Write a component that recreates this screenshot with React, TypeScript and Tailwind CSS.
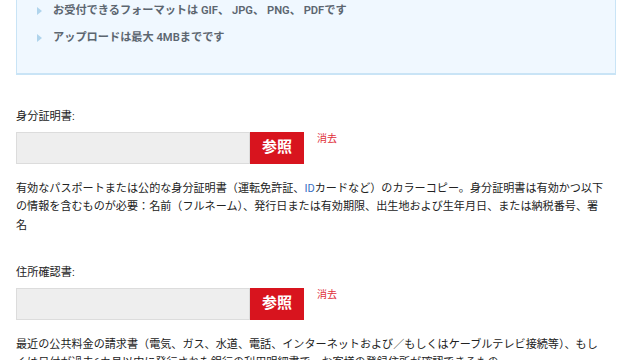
const font = { fontFamily: '"Roboto", "Noto Sans CJK JP", sans-serif' };

const formats = ['お受付できるフォーマットは GIF、 JPG、 PNG、 PDFです', 'アップロードは最大 4MBまでです'];

interface UploadFieldProps {
  label: string;
  note: React.ReactNode;
}

const UploadField = ({ label, note }: UploadFieldProps) => (
  <div className="flex flex-col">
    <label className="text-[11.2px] leading-[19px] text-[#222]">{label}</label>
    <div className="mt-[5.5px] flex items-start">
      <div className="h-[32px] w-[234px] border border-[#dcdcdc] bg-[#eeeeee]" />
      <button type="button" className="h-[32px] w-[54px] bg-[#d8141e] text-[15px] font-bold text-white">
        参照
      </button>
      <button type="button" className="ml-[13px] mt-[1px] text-[10px] leading-[12px] text-[#e0303a]">
        消去
      </button>
    </div>
    <p className="mt-[16px] w-[589px] text-[11.1px] leading-[18.5px] text-[#222]">{note}</p>
  </div>
);

export default function App() {
  return (
    <div className="h-[360px] w-[640px] overflow-hidden bg-white pl-4" style={font}>
      <div className="w-[600px]">
        <ul className="flex flex-col gap-2 border-x border-b-2 border-[#c9e4f6] bg-[#f0f8ff] pb-[26px] pl-5 pt-[1px]">
          {formats.map((text) => (
            <li key={text} className="flex items-center text-[11.2px] leading-[19px] font-semibold text-[#5c6670]">
              <span className="mr-[11px] h-0 w-0 border-y-[4px] border-l-[5px] border-y-transparent border-l-[#b0d4ec]" />
              {text}
            </li>
          ))}
        </ul>

        <div className="mt-[32px] flex flex-col gap-[28px]">
          <UploadField
            label="身分証明書:"
            note={
              <>
                有効なパスポートまたは公的な身分証明書（運転免許証、<span className="text-[#3a6fc4]">ID</span>カードなど）のカラーコピー。身分証明書は有効かつ以下の情報を含むものが必要：名前（フルネーム）、発行日または有効期限、出生地および生年月日、または納税番号、署名
              </>
            }
          />
          <UploadField
            label="住所確認書:"
            note="最近の公共料金の請求書（電気、ガス、水道、電話、インターネットおよび／もしくはケーブルテレビ接続等）、もしくは日付が過去6カ月以内に発行された銀行の利用明細書で、お客様の登録住所が確認できるもの"
          />
        </div>
      </div>
    </div>
  );
}
